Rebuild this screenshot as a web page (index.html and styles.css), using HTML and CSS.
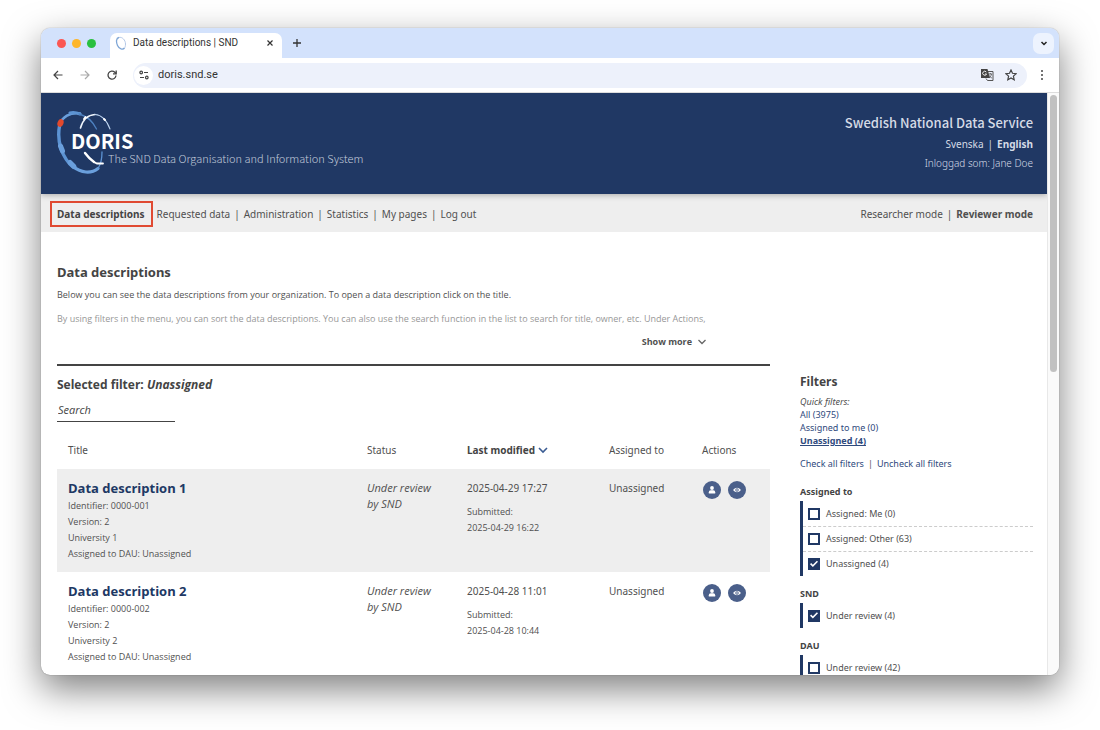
FILE: index.html
```html
<!DOCTYPE html>
<html lang="en">
<head>
<meta charset="utf-8">
<title>Data descriptions | SND</title>
<link rel="stylesheet" href="styles.css">
</head>
<body>
<div class="window">
  <div class="tabstrip">
    <div class="lights"><i class="light red"></i><i class="light amber"></i><i class="light green"></i></div>
    <div class="tab">
      <svg class="favicon" viewBox="0 0 12 14" width="12" height="14" fill="none"><path d="M4 1.5C1 2 1 6 2.500 9.500C4 13 8 14 9.500 12" stroke="#7fa6d6" stroke-width="1.300"/><path d="M4 1.500C7 .5 10.500 4 10.500 8C10.500 10 10 11.500 9.500 12" stroke="#b4c8e6"/></svg>
      <span class="tab-title">Data descriptions | SND</span>
      <button class="plain" aria-label="Close tab"><svg viewBox="0 0 10 10" width="10" height="10" stroke="#333" stroke-width="1.200"><path d="M2.500 2.500l5 5M7.500 2.500l-5 5"/></svg></button>
    </div>
    <button class="plain new-tab" aria-label="New tab"><svg viewBox="0 0 10 10" width="10" height="10" stroke="#333" stroke-width="1.300"><path d="M5 1v8M1 5h8"/></svg></button>
    <button class="plain tab-search" aria-label="Search tabs"><svg viewBox="0 0 10 10" width="10" height="10" fill="none" stroke="#222" stroke-width="1.500"><path d="M2.500 4l2.500 2.500L7.500 4"/></svg></button>
  </div>
  <div class="toolbar">
    <button class="plain" aria-label="Back"><svg viewBox="0 0 12 12" width="12" height="12" fill="none" stroke="#444" stroke-width="1.200"><path d="M10.500 6H2M6 2L2 6l4 4"/></svg></button>
    <button class="plain" aria-label="Forward"><svg viewBox="0 0 12 12" width="12" height="12" fill="none" stroke="#aaa" stroke-width="1.200"><path d="M1.500 6H10M6 2l4 4-4 4"/></svg></button>
    <button class="plain" aria-label="Reload"><svg viewBox="0 0 12 12" width="12" height="12" fill="none" stroke="#444" stroke-width="1.300"><path d="M10 6.500A4 4 0 1 1 8.800 3.200L10 4.500"/><path d="M10.200 1.500V4.800H7"/></svg></button>
    <div class="address">
      <span class="site-info"><svg viewBox="0 0 12 10" width="12" height="10" fill="none" stroke="#444" stroke-width="1.200"><circle cx="3.200" cy="2.500" r="1.300"/><path d="M6 2.500h4M2 7.500h4"/><circle cx="8.800" cy="7.500" r="1.300"/></svg></span>
      <input class="url" type="text" value="doris.snd.se" aria-label="Address">
      <button class="plain" aria-label="Translate"><svg viewBox="0 0 14 14" width="14" height="14"><path d="M1 1h6.500l2.500 9H1z" fill="#444"/><path d="M6.300 4A2 2 0 1 0 6.600 6H5" fill="none" stroke="#fff" stroke-width=".9"/><path d="M8 3.500h5v9H7.500L6 10.500" fill="none" stroke="#555"/><path d="M8.500 6h3.500M10.300 5v1M11.500 6c-.3 2-1.300 3-2.500 4M9 7.500c1 1.500 2 2 3 2.500" fill="none" stroke="#555" stroke-width=".8"/></svg></button>
      <button class="plain star" aria-label="Bookmark"><svg viewBox="0 0 12 12" width="12" height="12" fill="none" stroke="#444" stroke-width="1.200"><path d="M6 1l1.500 3.300 3.600.4-2.700 2.400.8 3.600L6 8.900l-3.200 1.800.8-3.600L.9 4.700l3.600-.4z"/></svg></button>
    </div>
    <button class="plain menu" aria-label="Menu"><svg viewBox="0 0 4 12" width="4" height="12" fill="#444"><circle cx="2" cy="2" r="1"/><circle cx="2" cy="6" r="1"/><circle cx="2" cy="10" r="1"/></svg></button>
  </div>

  <div class="viewport">
    <div class="page">
      <header class="site-header">
        <svg class="logo" viewBox="0 0 340 68" width="340" height="68" role="img" aria-label="DORIS, The SND Data Organisation and Information System">
          <g fill="none" stroke-linecap="round">
            <path d="M2.500 15C5 7 13 2 23 3.500" stroke="#6a9fdc" stroke-width="2.600"/>
            <path d="M13 3q4-1.500 10 1" stroke="#5c93d3" stroke-width="3"/>
            <path d="M22 4C30 6 36 12 39.500 19" stroke="#4d80bf" stroke-width="1.300"/>
            <path d="M2.500 16C1 24 1.500 31 4 39C7 47 11 53 16 57" stroke="#5c93d3" stroke-width="3.400"/>
            <path d="M3.500 36l2 5M13 52.500l4 4" stroke="#6a9fdc" stroke-width="5"/>
            <path d="M16 56.500C24 63 34 64 41 58.500" stroke="#6a9fdc" stroke-width="3.200"/>
            <path d="M41 58.500C44 54 45 48 45 42" stroke="#5c93d3" stroke-width="1.300"/>
            <path d="M23.500 18C26 9 31 5 38 4.500" stroke="#eef4fb" stroke-width="1.600"/>
            <path d="M38 4.500C46 5 50 11 53 19" stroke="#bcd2ee" stroke-width="1.100"/>
            <path d="M27 9l1.500-2M47 9l1 1" stroke="#fff" stroke-width="2"/>
            <path d="M28 43C31 47 34 50 37 52" stroke="#fff" stroke-width="2.400"/>
            <path d="M37 52l3 1.500h6" stroke="#fff" stroke-width="1.800"/>
          </g>
          <ellipse cx="3.500" cy="13" rx="3" ry="4" fill="#e2492c" transform="rotate(20 3.500 13)"/>
          <text class="logo-name" x="14" y="39">DORIS</text>
          <text class="logo-tag" x="51" y="53">The SND Data Organisation and Information System</text>
        </svg>
        <div class="account">
          <div class="org">Swedish National Data Service</div>
          <div class="links lang"><a href="#">Svenska</a><span>|</span><a href="#"><b>English</b></a></div>
          <div class="user">Inloggad som: Jane Doe</div>
        </div>
      </header>
      <nav class="main-nav">
        <div class="links"><a class="current" href="#">Data descriptions</a><a href="#">Requested data</a><span>|</span><a href="#">Administration</a><span>|</span><a href="#">Statistics</a><span>|</span><a href="#">My pages</a><span>|</span><a href="#">Log out</a></div>
        <div class="links"><a href="#">Researcher mode</a><span>|</span><a href="#"><b>Reviewer mode</b></a></div>
      </nav>
      <div class="columns">
        <main class="content">
          <h1>Data descriptions</h1>
          <p class="intro">Below you can see the data descriptions from your organization. To open a data description click on the title.</p>
          <p class="intro faded">By using filters in the menu, you can sort the data descriptions. You can also use the search function in the list to search for title, owner, etc. Under Actions,</p>
          <div class="more-row"><button class="plain more">Show more <svg viewBox="0 0 10 8" width="10" height="8" fill="none" stroke="#666" stroke-width="1.300"><path d="M1.500 2L5 5.500 8.500 2"/></svg></button></div>
          <h2>Selected filter: <em>Unassigned</em></h2>
          <input class="search" type="search" placeholder="Search" aria-label="Search">
          <table class="list">
            <colgroup><col><col class="c-status"><col class="c-modified"><col class="c-assigned"><col class="c-actions"></colgroup>
            <thead><tr><th>Title</th><th>Status</th><th class="sorted">Last modified <svg viewBox="0 0 10 8" width="10" height="8" fill="none" stroke="#3b5c93" stroke-width="1.600"><path d="M1 2l4 4 4-4"/></svg></th><th>Assigned to</th><th>Actions</th></tr></thead>
            <tbody>
              <tr>
                <td><a class="title" href="#">Data description 1</a><div class="meta">Identifier: 0000-001<br>Version: 2<br>University 1<br>Assigned to DAU: Unassigned</div></td>
                <td><em>Under review by SND</em></td>
                <td>2025-04-29 17:27<div class="meta submitted">Submitted:<br>2025-04-29 16:22</div></td>
                <td>Unassigned</td>
                <td><div class="actions"><button class="round" aria-label="Assign"><svg viewBox="0 0 10 10" width="10" height="10" fill="#fff"><circle cx="5" cy="3" r="1.900"/><path d="M1.800 8.500V7.300q0-2 2-2h2.400q2 0 2 2v1.200z"/></svg></button><button class="round" aria-label="View"><svg viewBox="0 0 10 10" width="10" height="10"><path d="M1 5Q5 .4 9 5Q5 9.600 1 5z" fill="#fff"/><circle cx="5" cy="5" r="1.700" fill="#4a5f8a"/><circle cx="5" cy="5" r=".8" fill="#fff"/></svg></button></div></td>
              </tr>
              <tr>
                <td><a class="title" href="#">Data description 2</a><div class="meta">Identifier: 0000-002<br>Version: 2<br>University 2<br>Assigned to DAU: Unassigned</div></td>
                <td><em>Under review by SND</em></td>
                <td>2025-04-28 11:01<div class="meta submitted">Submitted:<br>2025-04-28 10:44</div></td>
                <td>Unassigned</td>
                <td><div class="actions"><button class="round" aria-label="Assign"><svg viewBox="0 0 10 10" width="10" height="10" fill="#fff"><circle cx="5" cy="3" r="1.900"/><path d="M1.800 8.500V7.300q0-2 2-2h2.400q2 0 2 2v1.200z"/></svg></button><button class="round" aria-label="View"><svg viewBox="0 0 10 10" width="10" height="10"><path d="M1 5Q5 .4 9 5Q5 9.600 1 5z" fill="#fff"/><circle cx="5" cy="5" r="1.700" fill="#4a5f8a"/><circle cx="5" cy="5" r=".8" fill="#fff"/></svg></button></div></td>
              </tr>
            </tbody>
          </table>
        </main>
        <aside class="filters">
          <h2 class="filters-title">Filters</h2>
          <div class="quick"><em>Quick filters:</em><a href="#">All (3975)</a><a href="#">Assigned to me (0)</a><a class="active" href="#">Unassigned (4)</a></div>
          <div class="links bulk"><a href="#">Check all filters</a><span>|</span><a href="#">Uncheck all filters</a></div>
          <h3>Assigned to</h3>
          <div class="group">
            <label><input type="checkbox">Assigned: Me (0)</label>
            <label><input type="checkbox">Assigned: Other (63)</label>
            <label><input type="checkbox" checked>Unassigned (4)</label>
          </div>
          <h3>SND</h3>
          <div class="group"><label><input type="checkbox" checked>Under review (4)</label></div>
          <h3>DAU</h3>
          <div class="group"><label><input type="checkbox">Under review (42)</label></div>
        </aside>
      </div>
    </div>
    <div class="scrollbar"><div class="thumb"></div></div>
  </div>
</div>
</body>
</html>
```
FILE: styles.css
```css
* { box-sizing: border-box; }
body {
  margin: 0;
  height: 100vh;
  padding: 28px 41px 55px;
  display: flex;
  background: #fff;
  color: #505050;
  font: 10px/16px "Noto Sans", "Open Sans", sans-serif;
}
a { color: inherit; text-decoration: none; }
h1, h2, h3, p { margin: 0; }
h1, h2, h3, .sorted, .more { color: #444; }
.plain { border: 0; padding: 0; background: none; font: inherit; color: inherit; display: flex; align-items: center; }
.links { display: flex; align-items: center; gap: 4px; }

.window {
  flex: 1;
  min-width: 0;
  display: flex;
  flex-direction: column;
  border-radius: 9px;
  overflow: hidden;
  background: #fff;
  box-shadow: 0 0 1px rgba(0,0,0,.5), 0 14px 36px rgba(0,0,0,.5);
}
.tabstrip {
  height: 30px;
  flex: none;
  display: flex;
  align-items: center;
  padding: 0 5px 0 16px;
  background: #d3e2fc;
}
.lights { display: flex; gap: 6px; margin-right: 14px; }
.light { width: 9px; height: 9px; border-radius: 50%; }
.red { background: #fb5753; }
.amber { background: #fdb62b; }
.green { background: #29c03f; }
.tab {
  width: 172px;
  height: 25px;
  align-self: flex-end;
  display: flex;
  align-items: center;
  padding: 0 7px 5px 5px;
  gap: 6px;
  background: #fff;
  border-radius: 7px 7px 0 0;
  color: #333;
  font: 10px/16px Roboto, sans-serif;
}
.tab-title { flex: 1; white-space: nowrap; }
.new-tab { margin-left: 10px; }
.tab-search {
  width: 21px;
  height: 21px;
  margin-left: auto;
  justify-content: center;
  border-radius: 7px;
  background: #edf3fe;
}
.toolbar {
  height: 35px;
  flex: none;
  display: flex;
  align-items: center;
  gap: 15px;
  padding: 0 15px 0 11px;
  border-bottom: 1px solid #ddd;
}
.address {
  flex: 1;
  height: 25px;
  display: flex;
  align-items: center;
  gap: 5px;
  padding: 0 10px 0 1px;
  border-radius: 13px;
  background: #edf1fb;
}
.site-info { width: 19px; height: 19px; border-radius: 50%; background: #fff; display: flex; align-items: center; justify-content: center; }
.url { flex: 1; min-width: 0; border: 0; padding: 0; background: none; color: #333; font: 11px/16px Roboto, sans-serif; }
.star { margin-left: 6px; }
.menu { margin-left: -2px; }

.viewport { flex: 1; min-height: 0; display: flex; }
.page { flex: 1; min-width: 0; overflow: hidden; }
.scrollbar { width: 12px; flex: none; padding: 2px; background: #fafafa; border-left: 1px solid #e8e8e8; }
.thumb { height: 48%; border-radius: 4px; background: #c1c1c1; }

.site-header {
  height: 101px;
  display: flex;
  justify-content: space-between;
  padding: 17px 14px 0 16px;
  background: #203864;
  color: #d5dbe6;
  position: relative;
  box-shadow: 0 1px 6px rgba(0,0,0,.3);
}
.logo-name { font: 700 20px "Noto Sans CJK SC", sans-serif; fill: #fff; }
.logo-tag { font: 300 11px "Noto Sans CJK SC", sans-serif; fill: #c3ccdb; }
.account { text-align: right; line-height: 19px; padding-top: 1px; }
.org { font: 500 13px/24px "Noto Sans CJK SC", sans-serif; }
.lang { justify-content: flex-end; }
.user { font-weight: 300; }

.main-nav {
  height: 38px;
  display: flex;
  align-items: center;
  justify-content: space-between;
  padding: 1px 14px 0 9px;
  background: #eee;
}
.current { display: inline-block; border: 2px solid #e04a32; padding: 3px 6px 3px 5px; font-weight: 700; color: #444; }

.columns { display: flex; gap: 30px; padding: 0 14px 0 16px; }
.content { flex: 1; min-width: 0; padding-top: 30px; }
h1 { font-size: 13px; line-height: 20px; }
.intro { font: 9px/16px "Open Sans", sans-serif; margin-top: 5px; }
.faded { margin-top: 8px; opacity: .6; }
.more-row { display: flex; justify-content: flex-end; margin-top: 7px; padding: 0 63px 14px 0; border-bottom: 2px solid #444; }
.more { font: 700 9px/16px "Open Sans", sans-serif; gap: 5px; }
.content h2 { font: 700 12px/16px "Open Sans", sans-serif; margin-top: 11px; }
.search {
  display: block;
  width: 118px;
  height: 25px;
  margin-top: 4px;
  padding: 0 1px;
  border: 0;
  border-bottom: 1px solid #444;
  border-radius: 0;
  background: none;
  font: italic 11px/16px "Open Sans", sans-serif;
}
.search::placeholder { color: #444; opacity: 1; }
.list { width: 100%; margin-top: 9px; table-layout: fixed; border-collapse: collapse; }
.c-status { width: 100px; }
.c-modified { width: 142px; }
.c-assigned { width: 93px; }
.c-actions { width: 79px; }
.list th { height: 38px; padding: 0 0 0 11px; text-align: left; font-weight: 400; }
.list .sorted { font-weight: 700; }
.list td { height: 103px; padding: 11px 11px 10px; vertical-align: top; }
.list tbody tr:nth-child(odd) { background: #eee; }
.list td em { display: block; font: italic 11px/16px "Open Sans", sans-serif; }
.title { display: block; font: 700 13px/16px "Open Sans", sans-serif; color: #203864; }
.meta { font: 9px/16px "Open Sans", sans-serif; margin-top: 2px; }
.submitted { margin-top: 8px; }
.actions { display: flex; gap: 7px; margin-top: 1px; padding-left: 1px; }
.round { width: 18px; height: 18px; border: 0; padding: 0; border-radius: 50%; background: #4a5f8a; display: flex; align-items: center; justify-content: center; }

.filters { width: 233px; flex: none; padding-top: 140px; font-size: 9px; }
.filters-title { font-size: 12px; line-height: 20px; margin-bottom: 3px; }
.quick { display: flex; flex-direction: column; align-items: flex-start; line-height: 13px; }
.filters a { color: #2f4a7d; }
.filters .active { font-weight: 700; text-decoration: underline; }
.bulk { margin-top: 9px; }
.filters h3 { font-size: 9px; line-height: 16px; margin-top: 10px; margin-bottom: 1px; }
.bulk + h3 { margin-top: 12px; }
.group { border-left: 3px solid #203864; }
.group label { display: flex; align-items: center; height: 25px; gap: 6px; padding-left: 5px; }
.group label + label { border-top: 1px dashed #ccc; }
.group input {
  appearance: none;
  width: 12px;
  height: 12px;
  margin: 0;
  border: 2px solid #203864;
  background: #fff;
}
.group input:checked { background: #203864; display: grid; place-items: center; }
.group input:checked::before {
  content: "";
  width: 8px;
  height: 8px;
  background: #fff;
  clip-path: polygon(0 52%, 14% 38%, 36% 60%, 86% 8%, 100% 22%, 36% 88%);
}
```
